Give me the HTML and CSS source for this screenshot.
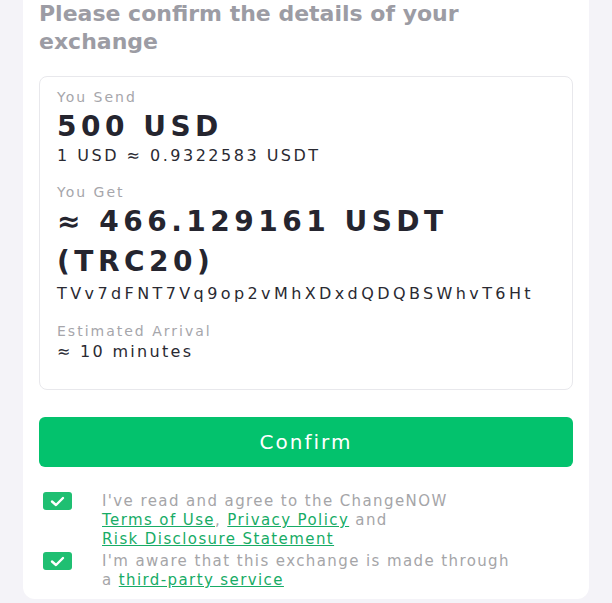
FILE: index.html
```html
<!DOCTYPE html>
<html lang="en">
<head>
<meta charset="utf-8">
<title>Confirm exchange</title>
<link rel="stylesheet" href="styles.css">
</head>
<body>
<main class="panel">
  <h1 class="title">Please confirm the details of your exchange</h1>
  <section class="card">
    <div class="label">You Send</div>
    <div class="amount">500 USD</div>
    <div class="rate">1 USD ≈ 0.9322583 USDT</div>
    <div class="label label-get">You Get</div>
    <div class="amount">≈ 466.129161 USDT (TRC20)</div>
    <div class="address">TVv7dFNT7Vq9op2vMhXDxdQDQBSWhvT6Ht</div>
    <div class="label label-eta">Estimated Arrival</div>
    <div class="eta">≈ 10 minutes</div>
  </section>
  <button class="btn" type="button">Confirm</button>
  <ul class="agree">
    <li class="agree-row">
      <span class="check"><svg viewBox="0 0 29 18" width="29" height="18"><polyline points="9,9.5 13,13 20,6" fill="none" stroke="#fff" stroke-width="2.4" stroke-linecap="round" stroke-linejoin="round"/></svg></span>
      <p class="agree-text">I've read and agree to the ChangeNOW<br><a href="#">Terms of Use</a>, <a href="#">Privacy Policy</a> and<br><a href="#">Risk Disclosure Statement</a></p>
    </li>
    <li class="agree-row">
      <span class="check"><svg viewBox="0 0 29 18" width="29" height="18"><polyline points="9,9.5 13,13 20,6" fill="none" stroke="#fff" stroke-width="2.4" stroke-linecap="round" stroke-linejoin="round"/></svg></span>
      <p class="agree-text">I'm aware that this exchange is made through<br>a <a href="#">third-party service</a></p>
    </li>
  </ul>
</main>
</body>
</html>
```
FILE: styles.css
```css
* { box-sizing: border-box; }
html, body {
  margin: 0;
  background: #f4f3f8;
}
body {
  font-family: "DejaVu Sans", "Liberation Sans", sans-serif;
  color: #25252f;
}
.panel {
  margin: 0 23px;
  background: #fff;
  border-radius: 0 0 12px 12px;
  padding: 0 16px 9px;
}
.title {
  margin: 0 0 20px;
  font-size: 22px;
  line-height: 28px;
  font-weight: bold;
  color: #9c9ca4;
  width: 440px;
}
.card {
  border: 1px solid #e8e8ec;
  border-radius: 8px;
  padding: 10px 17px 26px;
}
.label {
  font-size: 14px;
  line-height: 20px;
  color: #a6a6ab;
  letter-spacing: 2px;
}
.label-get { margin-top: 15px; }
.label-eta { margin-top: 16px; }
.amount {
  font-size: 28px;
  line-height: 40px;
  font-weight: bold;
  letter-spacing: 4.5px;
  color: #25252f;
}
.rate, .address, .eta {
  font-size: 16px;
  line-height: 22px;
  color: #2a2a32;
}
.rate { letter-spacing: 2.5px; margin-top: -2px; }
.address { letter-spacing: 3.4px; margin-top: 1px; }
.eta { letter-spacing: 2.3px; }
.btn {
  display: block;
  width: 100%;
  height: 50px;
  margin-top: 27px;
  border: 0;
  border-radius: 6px;
  background: #03c26d;
  color: #fff;
  font-family: inherit;
  font-size: 20px;
  letter-spacing: 2px;
}
.agree {
  list-style: none;
  margin: 25px 0 0;
  padding: 0 0 0 4px;
}
.agree-row {
  display: flex;
  gap: 30px;
  align-items: flex-start;
}
.agree-row + .agree-row { margin-top: 3px; }
.check {
  flex: none;
  width: 29px;
  height: 18px;
  border-radius: 3px;
  background: #1fbf72;
  display: flex;
  margin-top: 0;
}
.agree-text {
  margin: 0;
  font-size: 15px;
  line-height: 19px;
  color: #a5a5a8;
  letter-spacing: 1.4px;
}
.agree-text a {
  color: #17ac66;
  text-decoration: underline;
}
```
